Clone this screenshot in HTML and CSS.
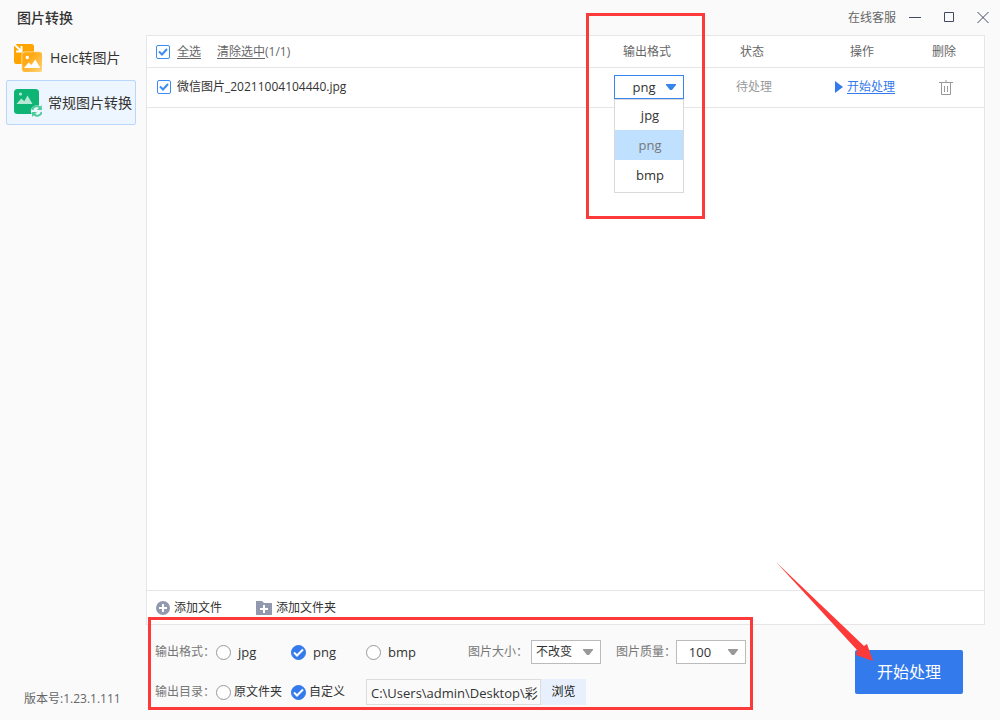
FILE: index.html
```html
<!DOCTYPE html>
<html lang="zh-CN">
<head>
<meta charset="utf-8">
<meta name="viewport" content="width=device-width, initial-scale=1">
<title>图片转换</title>
<link rel="stylesheet" href="styles.css">
</head>
<body>
<div class="app">
  <header class="titlebar">
    <h1 class="title">图片转换</h1>
    <a class="support" href="#">在线客服</a>
    <button class="win-btn" type="button" aria-label="最小化"><svg width="12" height="12" viewBox="0 0 12 12"><path d="M0 5.5h12" /></svg></button>
    <button class="win-btn" type="button" aria-label="最大化"><svg width="12" height="12" viewBox="0 0 12 12"><path d="M1.500 .5h9v9h-9z" /></svg></button>
    <button class="win-btn" type="button" aria-label="关闭"><svg width="12" height="12" viewBox="0 0 12 12"><path d="M.5 0l11 11M11.500 0l-11 11" /></svg></button>
  </header>

  <nav class="sidebar">
    <a class="nav-item heic" href="#">
      <svg width="28" height="28" viewBox="0 0 28 28">
        <defs>
          <linearGradient id="photo" x1="0" y1="0" x2="1" y2="1"><stop offset="0.300" stop-color="#ffa810" /><stop offset="1" stop-color="#ffd27a" /></linearGradient>
        </defs>
        <rect width="20" height="20" rx="2.500" fill="#ffa400" />
        <path fill="none" stroke="#fff" stroke-width="2" d="M0 0l6.500 6.500M7.500 2v5.500H2" />
        <rect x="7.500" y="7.500" width="21" height="21" rx="3.500" fill="#ffe3ad" />
        <rect x="8.300" y="8.300" width="19.700" height="19.700" rx="3" fill="url(#photo)" />
        <circle cx="13.300" cy="13.500" r="1.700" fill="#fff" />
        <path fill="#fff" d="M9.800 24l5-5.500 2.500 2.500 4-5.500 5 8.500z" />
      </svg>
      <span>Heic转图片</span>
    </a>
    <a class="nav-item active" href="#" aria-current="page">
      <svg width="28" height="28" viewBox="0 0 28 28">
        <rect width="25" height="25" rx="3.500" fill="#0db473" />
        <circle cx="6.500" cy="5" r="1.600" fill="#b6e8d5" />
        <path fill="#b6e8d5" d="M2.500 15l4.800-5.500 3 2.700L13.500 6.500l5 8.500z" />
        <ellipse cx="23" cy="22" rx="6.200" ry="5.800" fill="#edf5ff" />
        <path fill="none" stroke="#4ccb98" stroke-width="2" d="M18.300 21c.8-4 5.500-5 8-2M27.700 23c-.8 4-5.500 5-8 2" />
        <path fill="#4ccb98" d="M27.800 16v5h-5zM18 28v-5h5z" />
      </svg>
      <span>常规图片转换</span>
    </a>
    <p class="version">版本号:1.23.1.111</p>
  </nav>

  <main class="panel">
    <table class="files">
      <thead>
        <tr>
          <th class="col-name">
            <div class="head-tools">
              <input class="check" id="all" type="checkbox" checked>
              <label class="underline" for="all">全选</label>
              <span class="clear"><a class="underline" href="#">清除选中</a>(1/1)</span>
            </div>
          </th>
          <th class="col-format"><div class="format-head">输出格式<span class="mark mark-format"></span></div></th>
          <th class="col-status">状态</th>
          <th class="col-action">操作</th>
          <th class="col-delete">删除</th>
        </tr>
      </thead>
      <tbody>
        <tr>
          <td>
            <div class="file">
              <input class="check" id="file1" type="checkbox" checked>
              <label for="file1">微信图片_20211004104440.jpg</label>
            </div>
          </td>
          <td>
            <div class="combo open">
              <select aria-label="输出格式"><option>jpg</option><option selected>png</option><option>bmp</option></select>
              <ul class="menu">
                <li>jpg</li>
                <li class="current">png</li>
                <li>bmp</li>
              </ul>
            </div>
          </td>
          <td class="pending">待处理</td>
          <td>
            <a class="start-link" href="#"><svg width="8" height="12" viewBox="0 0 8 12"><path d="M0 0l8 6-8 6z" /></svg><span class="underline">开始处理</span></a>
          </td>
          <td>
            <button class="trash" type="button" aria-label="删除"><svg width="14" height="15" viewBox="0 0 14 15"><path d="M0 2.500h14M7 0v2.500M2.500 2.500v12h9v-12M5.500 6v6M8.500 6v6" /></svg></button>
          </td>
        </tr>
      </tbody>
    </table>
    <div class="add-bar">
      <button class="add" type="button">
        <svg width="14" height="14" viewBox="0 0 14 14"><circle cx="7" cy="7" r="7" fill="#9299ae" /><path d="M7 3v8M3 7h8" stroke="#fff" stroke-width="2" /></svg>添加文件
      </button>
      <button class="add" type="button">
        <svg width="16" height="14" viewBox="0 0 16 14"><path d="M0 0h6l2 2h8v12H0z" fill="#9299ae" /><path d="M8 4v8M4 8h8" stroke="#fff" stroke-width="2" /></svg>添加文件夹
      </button>
    </div>
  </main>

  <footer class="settings">
    <span class="mark mark-settings"></span>
    <div class="options">
      <div class="line">
        <span class="caption">输出格式：</span>
        <label class="choice"><input type="radio" name="format">jpg</label>
        <label class="choice"><input type="radio" name="format" checked>png</label>
        <label class="choice"><input type="radio" name="format">bmp</label>
        <label class="caption size" for="size">图片大小：</label>
        <div class="combo"><select class="left" id="size"><option>不改变</option></select></div>
        <label class="caption quality" for="quality">图片质量：</label>
        <div class="combo"><select class="number" id="quality"><option>100</option></select></div>
      </div>
      <div class="line">
        <span class="caption">输出目录：</span>
        <label class="choice folder"><input type="radio" name="dir">原文件夹</label>
        <label class="choice folder"><input type="radio" name="dir" checked>自定义</label>
        <input class="path" type="text" aria-label="输出目录" value="C:\Users\admin\Desktop\彩">
        <button class="browse" type="button">浏览</button>
      </div>
    </div>
    <div class="run-box">
      <button class="run" type="button">开始处理</button>
      <svg class="arrow" width="98" height="100" viewBox="0 0 98 100"><path d="M0 0L88 84l3-2 6 17-17-6 1-5z" /></svg>
    </div>
  </footer>
</div>
</body>
</html>
```

FILE: styles.css
```css
* {
  box-sizing: border-box;
}

body {
  margin: 0;
  background: #fafafa;
  color: #333;
  font: 12px/18px "Open Sans", "Noto Sans CJK SC", sans-serif;
}

button,
input,
select {
  margin: 0;
  color: inherit;
  font: inherit;
}

button {
  padding: 0;
  border: 0;
  background: none;
}

a {
  color: inherit;
  text-decoration: none;
}

svg {
  display: block;
  flex: none;
}

.underline {
  text-decoration: underline;
  text-underline-offset: 2px;
}

.app {
  display: grid;
  grid-template: 35px 1fr auto / 146px 1fr;
  min-height: 100vh;
}

.titlebar {
  grid-column: 1 / -1;
  display: flex;
  align-items: center;
  padding-left: 17px;
}

.title {
  flex: 1;
  margin: 0;
  font-size: 14px;
  font-weight: 500;
}

.support {
  margin-right: 2px;
  color: #666;
}

.win-btn {
  display: grid;
  place-items: center;
  width: 34px;
  height: 34px;
}

.win-btn path {
  fill: none;
  stroke: #414a62;
}

.sidebar {
  grid-row: 2 / 4;
  display: flex;
  flex-direction: column;
  padding: 0 10px 12px 6px;
}

.nav-item {
  display: flex;
  align-items: center;
  gap: 6px;
  height: 45px;
  padding-left: 7px;
  border: 1px solid transparent;
  border-radius: 2px;
  font-size: 14px;
  white-space: nowrap;
}

.nav-item.heic {
  gap: 8px;
}

.nav-item.active {
  border-color: #b9d7fd;
  background: #edf5ff;
}

.version {
  margin: auto 0 0;
  padding-left: 18px;
  color: #666;
}

.panel {
  display: flex;
  flex-direction: column;
  margin-right: 15px;
  border: 1px solid #e6e6e6;
  background: #fff;
}

.files {
  width: 100%;
  border-spacing: 0;
  table-layout: fixed;
}

.files th,
.files td {
  height: 32px;
  padding: 0;
  border-bottom: 1px solid #e6e6e6;
  color: #666;
  font-weight: 400;
  text-align: center;
}

.files td {
  height: 40px;
  padding-bottom: 1px;
}

.col-format {
  width: 74px;
}

.col-status {
  width: 136px;
}

.col-action {
  width: 84px;
}

.col-delete {
  width: 80px;
}

.format-head {
  position: relative;
}

.head-tools,
.file {
  display: flex;
  align-items: center;
  gap: 7px;
  padding-left: 9px;
}

.file {
  gap: 6px;
  padding-left: 10px;
  color: #333;
}

.clear {
  margin-left: 9px;
}

.check {
  appearance: none;
  width: 14px;
  height: 14px;
  border: 1px solid #3d8bf5;
  border-radius: 2px;
  background: #fff;
}

.check:checked {
  background-image: url("data:image/svg+xml,%3Csvg xmlns='http://www.w3.org/2000/svg' viewBox='0 0 12 12'%3E%3Cpath d='M2 5.500l3 3 5-5.500' fill='none' stroke='%233d8bf5' stroke-width='2'/%3E%3C/svg%3E");
}

.combo {
  position: relative;
  width: 70px;
  color: #999;
}

.combo::after {
  content: "";
  position: absolute;
  top: 9px;
  right: 8px;
  width: 10px;
  height: 6px;
  background: currentColor;
  clip-path: polygon(0 0, 100% 0, 100% 17%, 60% 100%, 40% 100%, 0 17%);
  pointer-events: none;
}

.combo select {
  appearance: none;
  display: block;
  width: 100%;
  height: 24px;
  padding: 0 22px 0 12px;
  border: 1px solid #bbb;
  border-radius: 0;
  background: #fff;
  color: #333;
  font-size: 13px;
  text-align: center;
  text-align-last: center;
}

.combo .left {
  padding-left: 4px;
  font-size: 12px;
  text-align: left;
  text-align-last: left;
}

.combo .number {
  padding-left: 0;
}

.combo.open {
  margin-left: auto;
  color: #3585ec;
}

.combo.open select {
  border-color: #3585ec;
}

.menu {
  position: absolute;
  top: 100%;
  left: 0;
  right: 0;
  z-index: 1;
  margin: 0;
  padding: 0 0 2px;
  border: 1px solid #d9d9d9;
  background: #fff;
  color: #333;
  font-size: 13px;
  line-height: 30px;
  list-style: none;
}

.menu li {
  padding-left: 2px;
}

.menu .current {
  background: #bfe1ff;
  color: #777;
}

.files .pending {
  padding-left: 4px;
  color: #999;
}

.start-link {
  display: flex;
  align-items: center;
  justify-content: center;
  gap: 4px;
  padding-left: 6px;
  color: #337aec;
}

.start-link path {
  fill: #337aec;
}

.trash {
  display: grid;
  margin: 0 auto;
  padding-left: 3px;
}

.trash path {
  fill: none;
  stroke: #999;
}

.add-bar {
  display: flex;
  align-items: center;
  gap: 34px;
  height: 34px;
  margin-top: auto;
  padding-left: 9px;
  border-top: 1px solid #e6e6e6;
}

.add {
  display: flex;
  align-items: center;
  gap: 4px;
}

.settings {
  position: relative;
  display: flex;
  align-items: flex-start;
  justify-content: space-between;
  padding: 15px 37px 15px 9px;
}

.options {
  display: flex;
  flex-direction: column;
  gap: 15px;
}

.line {
  display: flex;
  align-items: center;
  white-space: nowrap;
}

.caption {
  width: 61px;
  color: #777;
}

.size {
  width: 63px;
  margin-left: 27px;
}

.quality {
  width: 60px;
  margin-left: 15px;
}

.choice {
  display: flex;
  align-items: center;
  gap: 7px;
  width: 75px;
  font-size: 13px;
}

.folder {
  gap: 3px;
  font-size: 12px;
}

.choice input {
  appearance: none;
  width: 15px;
  height: 15px;
  border: 1px solid #999;
  border-radius: 50%;
  background: #fff;
}

.choice input:checked {
  border-color: #337aec;
  background: #337aec url("data:image/svg+xml,%3Csvg xmlns='http://www.w3.org/2000/svg' viewBox='0 0 13 13'%3E%3Cpath d='M2 6.500l3 3 6-6' fill='none' stroke='white' stroke-width='2'/%3E%3C/svg%3E");
}

.path {
  width: 175px;
  height: 26px;
  padding: 0 0 0 4px;
  border: 1px solid #ddd;
  background: #fafafa;
  font-size: 13px;
}

.browse {
  width: 45px;
  height: 26px;
  background: #e9f0fd;
  color: #111;
}

.run-box {
  position: relative;
  margin-top: 10px;
}

.run {
  display: block;
  width: 108px;
  height: 44px;
  border-radius: 2px;
  background: #337aec;
  color: #fff;
  font-size: 16px;
}

.arrow {
  position: absolute;
  top: -88px;
  left: -79px;
  pointer-events: none;
}

.arrow path {
  fill: #fd3a3a;
}

.mark {
  position: absolute;
  border: 3px solid #fd3a3a;
  pointer-events: none;
}

.mark-format {
  top: -30px;
  left: -24px;
  z-index: 2;
  width: 119px;
  height: 206px;
}

.mark-settings {
  top: -8px;
  left: 2px;
  width: 605px;
  height: 93px;
}
```
